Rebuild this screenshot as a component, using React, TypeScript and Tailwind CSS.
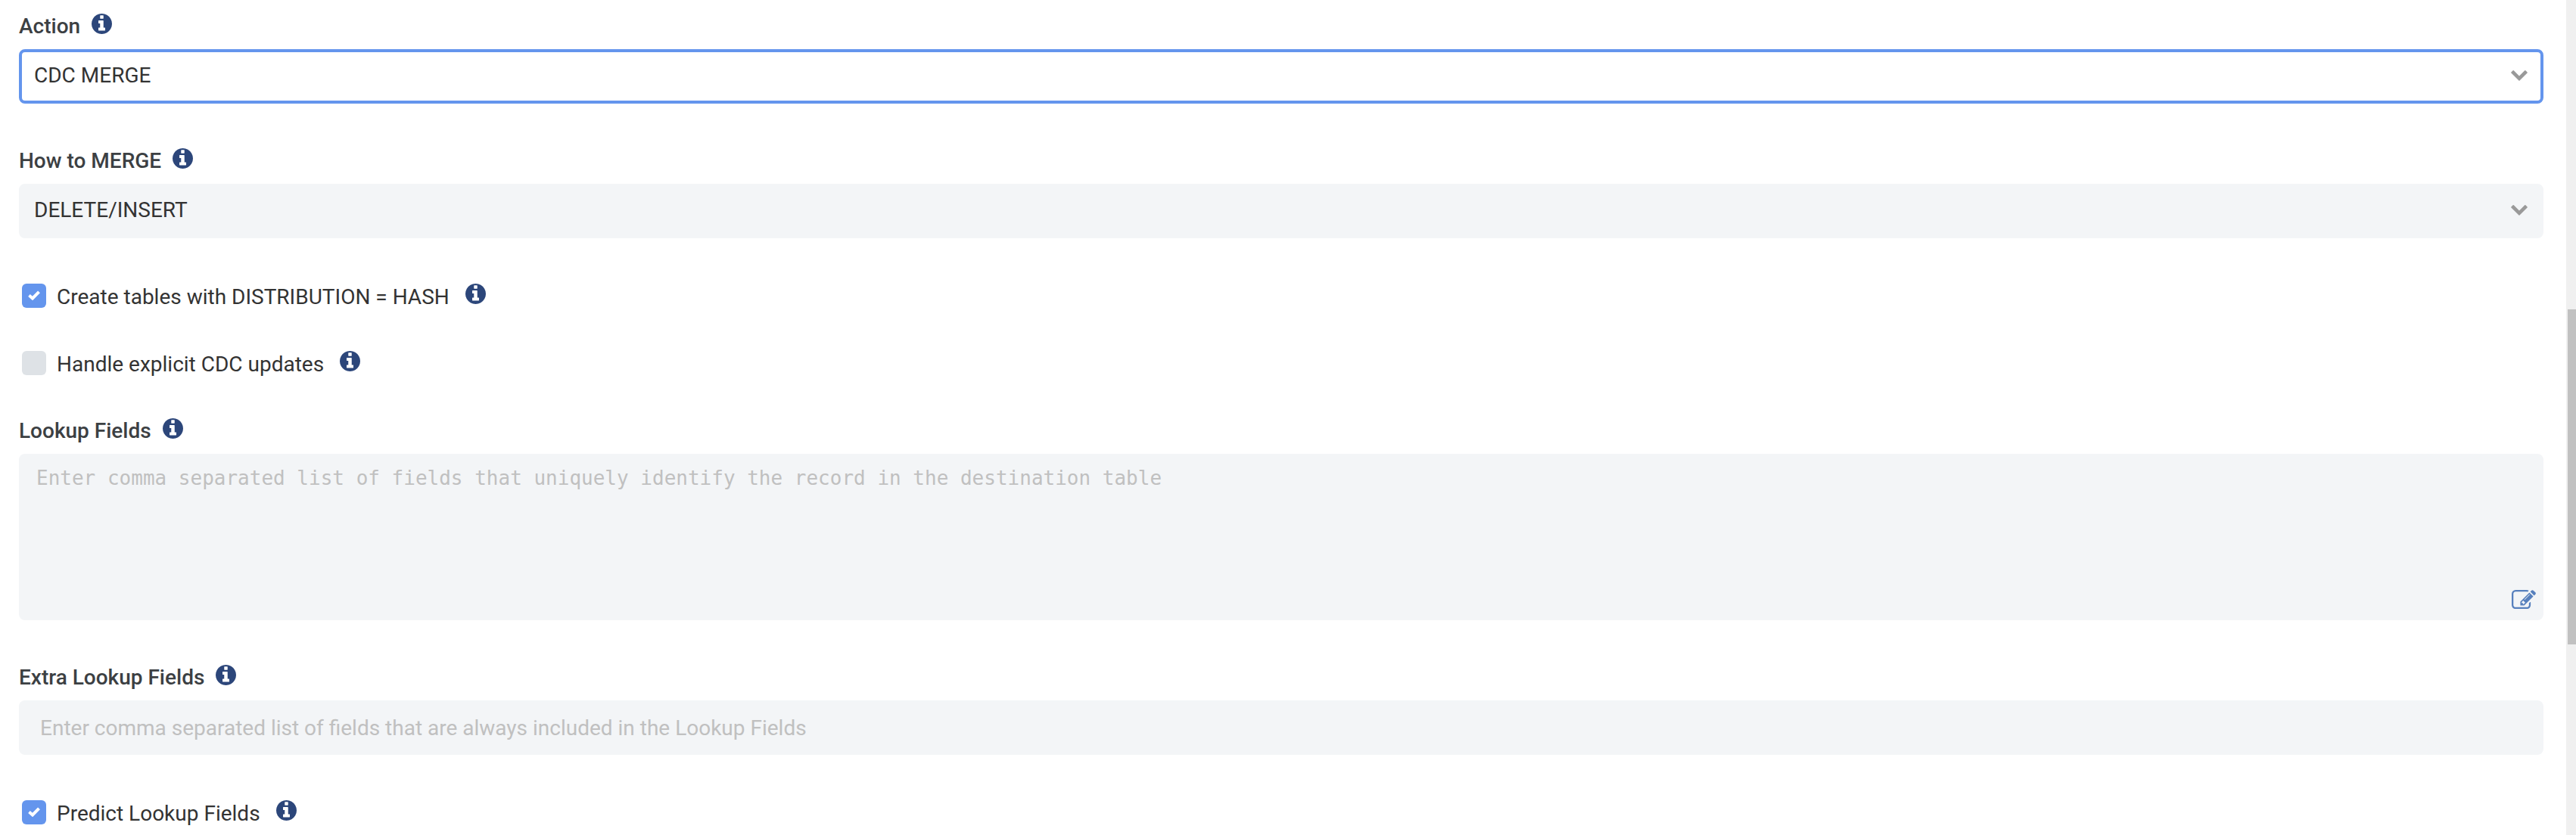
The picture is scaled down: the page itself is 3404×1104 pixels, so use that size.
import { ReactNode, useState } from "react";

const InfoIcon = () => (
    <svg
        viewBox="0 128 1536 1536"
        className="size-[27px] shrink-0 fill-[#2c467a]"
        aria-hidden="true"
    >
        <path d="M1024 1376v-160q0-14-9-23t-23-9h-96v-512q0-14-9-23t-23-9h-320q-14 0-23 9t-9 23v160q0 14 9 23t23 9h96v320h-96q-14 0-23 9t-9 23v160q0 14 9 23t23 9h448q14 0 23-9t9-23zm-128-896v-192q0-14-9-23t-23-9h-192q-14 0-23 9t-9 23v192q0 14 9 23t23 9h192q14 0 23-9t9-23zm640 416q0 209-103 385.5t-279.5 279.5-385.5 103-385.5-103-279.5-279.5-103-385.5 103-385.5 279.5-279.5 385.5-103 385.5 103 279.5 279.5 103 385.5z" />
    </svg>
);

const EditIcon = () => (
    <svg
        viewBox="0 128 1792 1408"
        className="w-8 fill-[#5780bd]"
        aria-hidden="true"
    >
        <path d="M888 1184l116-116-152-152-116 116v56h96v96h56zm440-720q-16-16-33 1l-350 350q-17 17-1 33t33-1l350-350q17-17 1-33zm80 594v190q0 119-84.5 203.5t-203.5 84.5h-832q-119 0-203.5-84.5t-84.5-203.5v-832q0-119 84.5-203.5t203.5-84.5h832q63 0 117 25 15 7 18 23 3 17-9 29l-49 49q-14 14-32 8-23-6-45-6h-832q-66 0-113 47t-47 113v832q0 66 47 113t113 47h832q66 0 113-47t47-113v-126q0-13 9-22l64-64q15-15 35-7t20 29zm-96-738l288 288-672 672h-288v-288zm444 132l-92 92-288-288 92-92q28-28 68-28t68 28l152 152q28 28 28 68t-28 68z" />
    </svg>
);

const ChevronIcon = () => (
    <svg
        viewBox="0 0 22 14"
        className="pointer-events-none absolute top-7 right-[21px] w-[22px] fill-[#999999]"
        aria-hidden="true"
    >
        <path d="M11 14L.4 3.6Q-.2 3 .4 2.400L2.600.3Q3.200-.2 3.800.3L11 7.500 18.200.3Q18.800-.2 19.400.3L21.600 2.400Q22.200 3 21.600 3.600Z" />
    </svg>
);

type FieldProps = {
    id: string;
    label: string;
    children: ReactNode;
};

const Field = ({ id, label, children }: FieldProps) => (
    <div className="flex flex-col">
        <div className="flex h-[65px] items-start gap-[15px] pt-[18px]">
            <label
                htmlFor={id}
                className="pt-px text-[28px] leading-8 font-medium text-[#3c4043]"
            >
                {label}
            </label>
            <InfoIcon />
        </div>
        {children}
    </div>
);

type SelectFieldProps = {
    id: string;
    label: string;
    options: string[];
    active?: boolean;
};

const SelectField = ({ id, label, options, active }: SelectFieldProps) => (
    <Field id={id} label={label}>
        <div className="relative">
            <select
                id={id}
                className={`block h-[72px] w-full appearance-none rounded-lg border-4 px-4 pb-0.5 text-[28px] text-[#333333] outline-none ${
                    active
                        ? "border-[#6495ed] bg-white"
                        : "border-[#f3f5f7] bg-[#f3f5f7]"
                }`}
            >
                {options.map((option) => (
                    <option key={option}>{option}</option>
                ))}
            </select>
            <ChevronIcon />
        </div>
    </Field>
);

type CheckFieldProps = {
    id: string;
    label: string;
    defaultChecked?: boolean;
};

const CheckField = ({ id, label, defaultChecked = false }: CheckFieldProps) => {
    const [checked, setChecked] = useState(defaultChecked);

    return (
        <div className="flex h-8 items-start pl-1">
            <div className="relative mr-[14px] size-8">
                <input
                    id={id}
                    type="checkbox"
                    checked={checked}
                    onChange={(e) => setChecked(e.target.checked)}
                    className="block size-8 appearance-none rounded-md bg-[#dee2e6] checked:bg-[#6495ed]"
                />
                {checked && (
                    <svg
                        viewBox="0 0 16 13"
                        className="pointer-events-none absolute top-[9px] left-2 w-4 fill-none stroke-white stroke-[4]"
                        aria-hidden="true"
                    >
                        <path d="M1.500 6.500L6 10.500 14.500 1.800" />
                    </svg>
                )}
            </div>
            <label
                htmlFor={id}
                className="mr-[21px] pt-0.5 text-[28px] leading-8 text-[#333333]"
            >
                {label}
            </label>
            <InfoIcon />
        </div>
    );
};

const App = () => {
    return (
        <div className="flex min-h-screen bg-white font-['Roboto',sans-serif]">
            <form className="flex flex-1 flex-col pr-[30px] pl-[25px]">
                <div className="flex flex-col gap-[41px]">
                    <SelectField
                        id="action"
                        label="Action"
                        options={["CDC MERGE", "MERGE", "INSERT"]}
                        active
                    />
                    <SelectField
                        id="how-to-merge"
                        label="How to MERGE"
                        options={["DELETE/INSERT", "Native MERGE"]}
                    />
                </div>

                <div className="flex flex-col gap-[57px] pt-[60px] pb-[39px]">
                    <CheckField
                        id="distribution"
                        label="Create tables with DISTRIBUTION = HASH"
                        defaultChecked
                    />
                    <CheckField
                        id="cdc-updates"
                        label="Handle explicit CDC updates"
                    />
                </div>

                <div className="flex flex-col gap-[41px]">
                    <Field id="lookup" label="Lookup Fields">
                        <div className="relative">
                            <textarea
                                id="lookup"
                                placeholder="Enter comma separated list of fields that uniquely identify the record in the destination table"
                                className="block h-[220px] w-full resize-none rounded-lg bg-[#f3f5f7] px-[23px] py-4 font-['DejaVu_Sans_Mono',monospace] text-[26px] leading-8 text-[#333333] outline-none placeholder:text-[#c0c0c0]"
                            />
                            <button
                                type="button"
                                aria-label="Edit lookup fields"
                                className="absolute right-[10px] bottom-[15px]"
                            >
                                <EditIcon />
                            </button>
                        </div>
                    </Field>
                    <Field id="extra-lookup" label="Extra Lookup Fields">
                        <input
                            id="extra-lookup"
                            type="text"
                            placeholder="Enter comma separated list of fields that are always included in the Lookup Fields"
                            className="block h-[72px] w-full rounded-lg bg-[#f3f5f7] px-7 text-[28px] text-[#333333] outline-none placeholder:text-[#c0c0c0]"
                        />
                    </Field>
                </div>

                <div className="pt-[60px]">
                    <CheckField
                        id="predict"
                        label="Predict Lookup Fields"
                        defaultChecked
                    />
                </div>
            </form>

            {/* scroll track */}
            <div className="flex w-[13px] flex-col bg-[#f0f0f0] pl-0.5">
                <div className="grow-[409]" />
                <div className="grow-[443] bg-[#c1c1c1]" />
                <div className="grow-[252]" />
            </div>
        </div>
    );
};

export default App;
